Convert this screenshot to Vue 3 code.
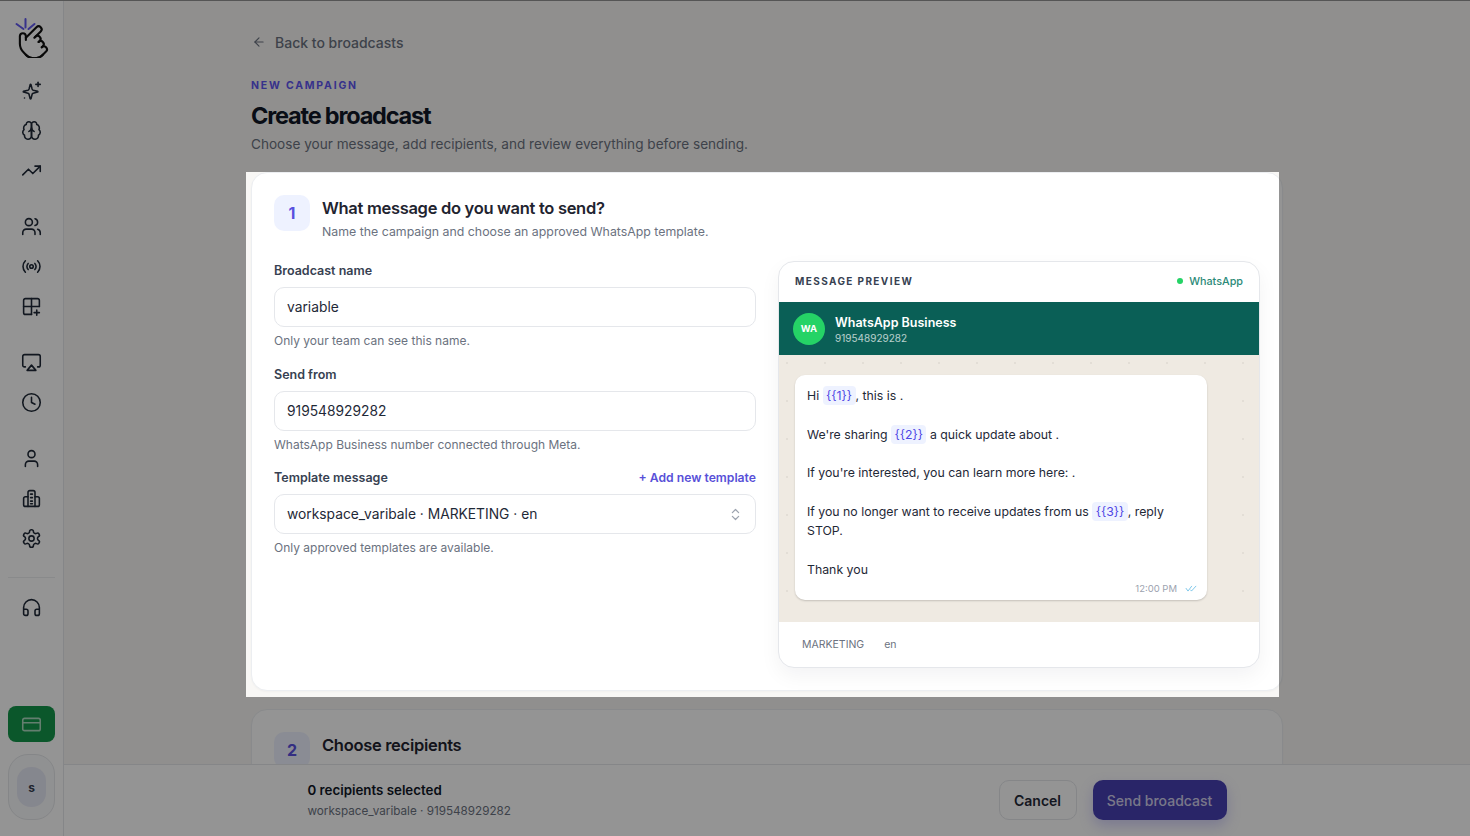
<template>
  <div class="app">
    <aside class="sidebar">
      <div class="logo">
        <svg width="36" height="40" viewBox="0 0 36 40" fill="none" stroke-linecap="round" stroke-linejoin="round">
          <g stroke="#6158f0" stroke-width="2">
            <path d="M2.5 6 9.5 11" />
            <path d="M11.5 1v8.5" />
            <path d="M20.5 6 14.5 11" />
          </g>
          <g transform="translate(20.35 24) rotate(45) scale(1.5) translate(-12 -12)" stroke="#111" stroke-width="1.4">
            <path d="M22 14a8 8 0 0 1-8 8" />
            <path d="M18 11v-1a2 2 0 0 0-2-2a2 2 0 0 0-2 2" />
            <path d="M14 10V9a2 2 0 0 0-2-2a2 2 0 0 0-2 2v1" />
            <path d="M10 9.5V4a2 2 0 0 0-2-2a2 2 0 0 0-2 2v10" />
            <path d="M18 11a2 2 0 1 1 4 0v3a8 8 0 0 1-8 8h-2c-2.8 0-4.5-.86-5.99-2.34l-3.6-3.6a2 2 0 0 1 2.83-2.82L7 15" />
          </g>
        </svg>
      </div>

      <nav class="nav">
        <div v-for="(group, g) in navGroups" :key="g" class="nav-group">
          <a v-for="item in group" :key="item.name" class="nav-item" :title="item.name">
            <svg class="icon" viewBox="0 0 24 24">
              <path v-for="(d, i) in item.paths" :key="i" :d="d" />
            </svg>
          </a>
        </div>
      </nav>

      <div class="nav-divider"></div>

      <a class="nav-item" title="Support">
        <svg class="icon" viewBox="0 0 24 24">
          <path d="M3 14h3a2 2 0 0 1 2 2v3a2 2 0 0 1-2 2H5a2 2 0 0 1-2-2v-7a9 9 0 0 1 18 0v7a2 2 0 0 1-2 2h-1a2 2 0 0 1-2-2v-3a2 2 0 0 1 2-2h3" />
        </svg>
      </a>

      <div class="sidebar-bottom">
        <button class="billing-btn" title="Billing">
          <svg class="icon icon-light" viewBox="0 0 24 24">
            <path d="M4 5h16a2 2 0 0 1 2 2v10a2 2 0 0 1-2 2H4a2 2 0 0 1-2-2V7a2 2 0 0 1 2-2z" />
            <path d="M2 10h20" />
          </svg>
        </button>
        <div class="account">
          <span class="account-avatar">s</span>
        </div>
      </div>
    </aside>

    <main class="main">
      <div class="scroll">
        <div class="content">
          <a class="back-link">
            <svg class="back-icon" viewBox="0 0 24 24">
              <path d="M19 12H5" />
              <path d="m12 19-7-7 7-7" />
            </svg>
            Back to broadcasts
          </a>

          <div class="eyebrow">NEW CAMPAIGN</div>
          <h1 class="page-title">Create broadcast</h1>
          <p class="page-sub">Choose your message, add recipients, and review everything before sending.</p>

          <section class="step-card">
            <header class="step-head">
              <span class="step-num">1</span>
              <div>
                <h2 class="step-title">What message do you want to send?</h2>
                <p class="step-sub">Name the campaign and choose an approved WhatsApp template.</p>
              </div>
            </header>

            <div class="step-body">
              <div class="form">
                <div class="field">
                  <label class="label">Broadcast name</label>
                  <input class="input" value="variable" />
                  <p class="help">Only your team can see this name.</p>
                </div>
                <div class="field">
                  <label class="label">Send from</label>
                  <input class="input" value="919548929282" />
                  <p class="help">WhatsApp Business number connected through Meta.</p>
                </div>
                <div class="field">
                  <div class="label-row">
                    <label class="label">Template message</label>
                    <a class="add-link">+ Add new template</a>
                  </div>
                  <div class="input select">
                    <span>workspace_varibale · MARKETING · en</span>
                    <svg class="select-icon" viewBox="0 0 24 24">
                      <path d="m7 15 5 5 5-5" />
                      <path d="m7 9 5-5 5 5" />
                    </svg>
                  </div>
                  <p class="help">Only approved templates are available.</p>
                </div>
              </div>

              <div class="preview">
                <div class="preview-head">
                  <span class="preview-label">MESSAGE PREVIEW</span>
                  <span class="preview-channel"><i class="dot"></i>WhatsApp</span>
                </div>
                <div class="wa-bar">
                  <span class="wa-avatar">WA</span>
                  <div class="wa-text">
                    <div class="wa-name">WhatsApp Business</div>
                    <div class="wa-number">919548929282</div>
                  </div>
                </div>
                <div class="chat">
                  <div class="bubble">
                    <p>Hi <span class="chip">{{ '{{1}' + '}' }}</span>, this is .</p>
                    <p>We're sharing <span class="chip">{{ '{{2}' + '}' }}</span> a quick update about .</p>
                    <p>If you're interested, you can learn more here: .</p>
                    <p>If you no longer want to receive updates from us <span class="chip">{{ '{{3}' + '}' }}</span>, reply STOP.</p>
                    <p>Thank you</p>
                    <div class="bubble-meta">
                      <span>12:00 PM</span>
                      <svg class="ticks" viewBox="0 0 14 8">
                        <path d="M1 3.5 3.5 7 8 1" />
                        <path d="M6.5 5.5 7.5 7 13 1" />
                      </svg>
                    </div>
                  </div>
                </div>
                <div class="preview-foot">
                  <span>MARKETING</span>
                  <span>en</span>
                </div>
              </div>
            </div>
          </section>

          <section class="step-card">
            <header class="step-head">
              <span class="step-num">2</span>
              <div>
                <h2 class="step-title">Choose recipients</h2>
              </div>
            </header>
          </section>
        </div>
      </div>

      <footer class="action-bar">
        <div class="action-inner">
          <div class="summary">
            <div class="selected">0 recipients selected</div>
            <div class="selected-sub">workspace_varibale · 919548929282</div>
          </div>
          <div class="actions">
            <button class="btn btn-cancel">Cancel</button>
            <button class="btn btn-send">Send broadcast</button>
          </div>
        </div>
      </footer>
    </main>

    <!-- Product tour dim layer, the hole sits over step 1 -->
    <div class="spotlight"></div>
  </div>
</template>

<script setup>
const navGroups = [
  [
    {
      name: 'AI',
      paths: [
        'M9.2 16.4a2 2 0 0 0-1.3-1.3l-5-1.3a.5.5 0 0 1 0-.9l5-1.3a2 2 0 0 0 1.3-1.3l1.3-5a.5.5 0 0 1 .9 0l1.3 5a2 2 0 0 0 1.3 1.3l5 1.3a.5.5 0 0 1 0 .9l-5 1.3a2 2 0 0 0-1.3 1.3l-1.3 5a.5.5 0 0 1-.9 0z',
        'M19.5 2.5v5',
        'M17 5h5',
        'M4 20.5h.01',
      ],
    },
    {
      name: 'Brain',
      paths: [
        'M12 5a3 3 0 1 0-5.997.125 4 4 0 0 0-2.526 5.77 4 4 0 0 0 .556 6.588A4 4 0 1 0 12 18Z',
        'M12 5a3 3 0 1 1 5.997.125 4 4 0 0 1 2.526 5.77 4 4 0 0 1-.556 6.588A4 4 0 1 1 12 18Z',
        'M15 13a4.5 4.5 0 0 1-3-4 4.5 4.5 0 0 1-3 4',
      ],
    },
    {
      name: 'Analytics',
      paths: ['M22 7 13.5 15.5 8.5 10.5 2 17', 'M16 7h6v6'],
    },
  ],
  [
    {
      name: 'Contacts',
      paths: [
        'M16 21v-2a4 4 0 0 0-4-4H6a4 4 0 0 0-4 4v2',
        'M13 7a4 4 0 1 1-8 0a4 4 0 1 1 8 0',
        'M22 21v-2a4 4 0 0 0-3-3.87',
        'M16 3.13a4 4 0 0 1 0 7.75',
      ],
    },
    {
      name: 'Broadcasts',
      paths: [
        'M5 5.5c-3.6 3.6-3.6 9.4 0 13',
        'M8.2 8.5c-1.9 1.9-1.9 5.1 0 7',
        'M14 12a2 2 0 1 1-4 0a2 2 0 1 1 4 0',
        'M15.8 8.5c1.9 1.9 1.9 5.1 0 7',
        'M19 5.5c3.6 3.6 3.6 9.4 0 13',
      ],
    },
    {
      name: 'Templates',
      paths: [
        'M12 3v18',
        'M3 12h18',
        'M21 12V5a2 2 0 0 0-2-2H5a2 2 0 0 0-2 2v14a2 2 0 0 0 2 2h7',
        'M18 16v6',
        'M15 19h6',
      ],
    },
  ],
  [
    {
      name: 'Campaigns',
      paths: [
        'M5 17H4a2 2 0 0 1-2-2V5a2 2 0 0 1 2-2h16a2 2 0 0 1 2 2v10a2 2 0 0 1-2 2h-1',
        'm12 15 5 6H7Z',
      ],
    },
    {
      name: 'History',
      paths: ['M22 12a10 10 0 1 1-20 0a10 10 0 1 1 20 0', 'M12 6v6l4 2'],
    },
  ],
  [
    {
      name: 'Profile',
      paths: ['M19 21v-2a4 4 0 0 0-4-4H9a4 4 0 0 0-4 4v2', 'M16 7a4 4 0 1 1-8 0a4 4 0 1 1 8 0'],
    },
    {
      name: 'Organisation',
      paths: [
        'M8 21V5a2 2 0 0 1 2-2h4a2 2 0 0 1 2 2v16',
        'M8 10H5a2 2 0 0 0-2 2v7a2 2 0 0 0 2 2h14a2 2 0 0 0 2-2v-7a2 2 0 0 0-2-2h-3',
        'M11 7h2',
        'M11 11h2',
        'M11 15h2',
        'M11 18h2',
      ],
    },
    {
      name: 'Settings',
      paths: [
        'M12.22 2h-.44a2 2 0 0 0-2 2v.18a2 2 0 0 1-1 1.73l-.43.25a2 2 0 0 1-2 0l-.15-.08a2 2 0 0 0-2.73.73l-.22.38a2 2 0 0 0 .73 2.73l.15.1a2 2 0 0 1 1 1.72v.51a2 2 0 0 1-1 1.74l-.15.09a2 2 0 0 0-.73 2.73l.22.38a2 2 0 0 0 2.73.73l.15-.08a2 2 0 0 1 2 0l.43.25a2 2 0 0 1 1 1.73V20a2 2 0 0 0 2 2h.44a2 2 0 0 0 2-2v-.18a2 2 0 0 1 1-1.73l.43-.25a2 2 0 0 1 2 0l.15.08a2 2 0 0 0 2.73-.73l.22-.39a2 2 0 0 0-.73-2.73l-.15-.08a2 2 0 0 1-1-1.74v-.5a2 2 0 0 1 1-1.74l.15-.09a2 2 0 0 0 .73-2.73l-.22-.38a2 2 0 0 0-2.73-.73l-.15.08a2 2 0 0 1-2 0l-.43-.25a2 2 0 0 1-1-1.73V4a2 2 0 0 0-2-2z',
        'M15 12a3 3 0 1 1-6 0a3 3 0 1 1 6 0',
      ],
    },
  ],
]
</script>

<style>
html,
body {
  margin: 0;
  height: 100%;
  overflow: hidden;
}
</style>

<style scoped>
.app {
  position: relative;
  display: flex;
  height: 836px;
  box-sizing: border-box;
  border-top: 1px solid #555;
  overflow: hidden;
  background: #f8f7f5;
  font-family: Inter, "Liberation Sans", sans-serif;
  color: #111827;
}

/* Sidebar */
.sidebar {
  display: flex;
  flex-direction: column;
  align-items: center;
  flex: 0 0 64px;
  box-sizing: border-box;
  background: #fff;
  border-right: 1px solid #e5e7eb;
}

.logo {
  display: flex;
  justify-content: center;
  height: 69px;
  padding-top: 17px;
  box-sizing: border-box;
}

.nav {
  display: flex;
  flex-direction: column;
  gap: 16px;
}

.nav-group {
  display: flex;
  flex-direction: column;
}

.nav-item {
  display: flex;
  align-items: center;
  justify-content: center;
  width: 40px;
  height: 40px;
}

.icon {
  width: 21px;
  height: 21px;
  fill: none;
  stroke: #1f2937;
  stroke-width: 1.8;
  stroke-linecap: round;
  stroke-linejoin: round;
}

.icon-light {
  stroke: #fff;
  opacity: 0.65;
}

.nav-divider {
  width: 47px;
  height: 1px;
  margin: 19px 0 9px;
  background: #edeef0;
}

.sidebar-bottom {
  display: flex;
  flex-direction: column;
  align-items: center;
  gap: 12px;
  margin-top: auto;
  padding-bottom: 16px;
}

.billing-btn {
  display: flex;
  align-items: center;
  justify-content: center;
  width: 47px;
  height: 36px;
  padding: 0;
  border: none;
  border-radius: 8px;
  background: #14964a;
}

.account {
  display: flex;
  align-items: center;
  justify-content: center;
  width: 47px;
  height: 66px;
  box-sizing: border-box;
  border: 1px solid #e5e7eb;
  border-radius: 20px;
  background: #f9fafb;
}

.account-avatar {
  display: flex;
  align-items: center;
  justify-content: center;
  width: 29px;
  height: 40px;
  border-radius: 14px;
  background: #e6e8f5;
  font-size: 12px;
  font-weight: 700;
  color: #374151;
}

/* Main column */
.main {
  display: flex;
  flex-direction: column;
  flex: 1;
  min-width: 0;
}

.scroll {
  flex: 1;
  min-height: 0;
  overflow: hidden;
}

.content {
  width: 1032px;
  margin: 0 auto;
  padding-top: 31px;
}

.back-link {
  display: flex;
  align-items: center;
  gap: 9px;
  height: 20px;
  padding-left: 1px;
  font-size: 14px;
  font-weight: 500;
  color: #6b7280;
}

.back-icon {
  width: 14px;
  height: 14px;
  fill: none;
  stroke: #6b7280;
  stroke-width: 2;
  stroke-linecap: round;
  stroke-linejoin: round;
}

.eyebrow {
  margin-top: 26px;
  font-size: 10.5px;
  line-height: 16px;
  font-weight: 700;
  letter-spacing: 0.17em;
  color: #5f56f0;
}

.page-title {
  margin: 6px 0 0;
  font-size: 23.5px;
  line-height: 32px;
  font-weight: 700;
  letter-spacing: -1.2px;
  color: #111827;
}

.page-sub {
  margin: 2px 0 0;
  font-size: 13.6px;
  line-height: 20px;
  color: #6b7280;
}

.step-card {
  box-sizing: border-box;
  margin-top: 18px;
  padding: 22px;
  background: #fff;
  border: 1px solid #eceef1;
  border-radius: 16px;
  box-shadow: 0 1px 2px rgba(0, 0, 0, 0.03);
}

.step-head {
  display: flex;
  gap: 12px;
}

.step-num {
  display: flex;
  align-items: center;
  justify-content: center;
  flex: 0 0 36px;
  height: 36px;
  border-radius: 10px;
  background: #eef2ff;
  font-size: 16px;
  font-weight: 700;
  color: #5850e0;
}

.step-title {
  margin: 1px 0 0;
  font-size: 16.5px;
  line-height: 24px;
  font-weight: 600;
  letter-spacing: -0.3px;
  color: #1f2430;
}

.step-sub {
  margin: 3px 0 0;
  font-size: 12.35px;
  line-height: 18px;
  color: #6b7280;
}

.step-body {
  display: grid;
  grid-template-columns: 482px 482px;
  gap: 22px;
  margin-top: 20px;
}

/* Form */
.form {
  display: flex;
  flex-direction: column;
  gap: 15px;
}

.label-row {
  display: flex;
  align-items: center;
  justify-content: space-between;
}

.label {
  display: block;
  padding-top: 1px;
  font-size: 12.5px;
  line-height: 18px;
  font-weight: 600;
  color: #374151;
}

.add-link {
  padding-top: 1px;
  font-size: 12.2px;
  line-height: 18px;
  font-weight: 600;
  color: #5850d8;
}

.input {
  display: block;
  width: 100%;
  height: 40px;
  box-sizing: border-box;
  margin-top: 7px;
  padding: 0 12px;
  border: 1px solid #e5e7eb;
  border-radius: 10px;
  outline: none;
  background: #fff;
  font: inherit;
  font-size: 13.8px;
  color: #1f2937;
}

.select {
  display: flex;
  align-items: center;
  justify-content: space-between;
}

.select-icon {
  width: 15px;
  height: 15px;
  fill: none;
  stroke: #9ca3af;
  stroke-width: 2;
  stroke-linecap: round;
  stroke-linejoin: round;
}

.help {
  margin: 5px 0 0;
  font-size: 12px;
  line-height: 17.5px;
  color: #6b7280;
}

/* Preview */
.preview {
  overflow: hidden;
  box-sizing: border-box;
  height: 407px;
  display: flex;
  flex-direction: column;
  background: #fff;
  border: 1px solid #e5e7eb;
  border-radius: 16px;
  box-shadow: 0 8px 20px rgba(17, 24, 39, 0.05);
}

.preview-head {
  display: flex;
  align-items: center;
  justify-content: space-between;
  flex: 0 0 40px;
  box-sizing: border-box;
  padding: 0 16px 2px;
}

.preview-label {
  font-size: 10px;
  font-weight: 700;
  letter-spacing: 0.14em;
  color: #374151;
}

.preview-channel {
  display: flex;
  align-items: center;
  gap: 6px;
  font-size: 10.8px;
  font-weight: 500;
  color: #2b8a78;
}

.dot {
  width: 6px;
  height: 6px;
  border-radius: 50%;
  background: #25d366;
}

.wa-bar {
  display: flex;
  align-items: center;
  gap: 10px;
  flex: 0 0 53px;
  padding: 0 14px;
  background: #0a5f56;
  color: #fff;
}

.wa-avatar {
  display: flex;
  align-items: center;
  justify-content: center;
  width: 32px;
  height: 32px;
  border-radius: 50%;
  background: #25d366;
  font-size: 9.5px;
  font-weight: 700;
}

.wa-text {
  padding-top: 2px;
}

.wa-name {
  font-size: 12.5px;
  line-height: 16px;
  font-weight: 600;
}

.wa-number {
  font-size: 10px;
  line-height: 14px;
  opacity: 0.7;
}

.chat {
  flex: 1;
  padding: 20px 52px 21px 16px;
  background-color: #efeae2;
  background-image: radial-gradient(circle, rgba(0, 0, 0, 0.05) 1px, transparent 1.2px);
  background-size: 38px 38px;
  background-position: -11px -11px;
}

.bubble {
  padding: 11px 12px 4px;
  background: #fff;
  border-radius: 10px;
  box-shadow: 0 1px 2px rgba(0, 0, 0, 0.18);
  font-size: 12.3px;
  line-height: 19.3px;
  color: #1f2937;
}

.bubble p {
  margin: 0 0 19.3px;
}

.bubble p:nth-last-of-type(1) {
  margin-bottom: 0;
}

.chip {
  padding: 2px 3.5px;
  border-radius: 4px;
  background: #eef2ff;
  color: #4f46e5;
}

.bubble-meta {
  display: flex;
  align-items: center;
  justify-content: flex-end;
  gap: 8px;
  margin: 3px -2px 0 0;
  font-size: 9.5px;
  line-height: 14px;
  color: #9ca3af;
}

.ticks {
  width: 12px;
  height: 7px;
  fill: none;
  stroke: #6bbfe6;
  stroke-width: 1;
}

.preview-foot {
  display: flex;
  align-items: center;
  gap: 20px;
  flex: 0 0 45px;
  padding: 0 23px;
  font-size: 10.5px;
  color: #6b7280;
}

/* Bottom action bar */
.action-bar {
  flex: 0 0 72px;
  box-sizing: border-box;
  padding-bottom: 1px;
  background: #fff;
  border-top: 1px solid #e5e7eb;
}

.action-inner {
  display: flex;
  align-items: center;
  justify-content: space-between;
  width: 919px;
  height: 70px;
  margin: 0 auto;
}

.summary {
  padding-top: 1px;
}

.selected {
  font-size: 13.3px;
  line-height: 18px;
  font-weight: 600;
  color: #111827;
}

.selected-sub {
  margin-top: 3px;
  font-size: 11.7px;
  line-height: 18px;
  color: #6b7280;
}

.actions {
  display: flex;
  gap: 16px;
}

.btn {
  height: 40px;
  padding: 0;
  border-radius: 10px;
  font: inherit;
  font-size: 14px;
  font-weight: 600;
  white-space: nowrap;
}

.btn-cancel {
  width: 78px;
  border: 1px solid #e5e7eb;
  background: #fff;
  color: #1f2937;
}

.btn-send {
  width: 134px;
  border: none;
  background: #4840b4;
  color: rgba(255, 255, 255, 0.75);
  font-weight: 500;
  box-shadow: 0 6px 14px rgba(79, 70, 229, 0.25);
}

/* Dim layer with the hole */
.spotlight {
  position: absolute;
  left: 246px;
  top: 171px;
  width: 1033px;
  height: 525px;
  box-shadow: 0 0 0 2000px rgba(0, 0, 0, 0.42);
  pointer-events: none;
}
</style>
